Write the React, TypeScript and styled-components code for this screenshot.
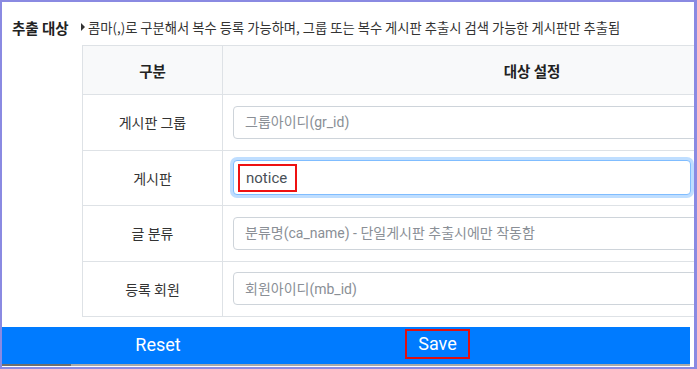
import styled, { createGlobalStyle, css } from "styled-components";

const GlobalStyle = createGlobalStyle`
  html, body {
    margin: 0;
    padding: 0;
    background: #ffffff;
  }
  * {
    box-sizing: border-box;
  }
`;

const rows = [
  { label: "게시판 그룹", placeholder: "그룹아이디(gr_id)", value: "" },
  { label: "게시판", placeholder: "", value: "notice", focused: true },
  {
    label: "글 분류",
    placeholder: "분류명(ca_name) - 단일게시판 추출시에만 작동함",
    value: "",
  },
  { label: "등록 회원", placeholder: "회원아이디(mb_id)", value: "" },
];

const App = () => {
  return (
    <>
      <GlobalStyle />
      <Frame>
        <InfoRow>
          <Title>추출 대상</Title>
          <Arrow />
          <Help>
            콤마(,)로 구분해서 복수 등록 가능하며, 그룹 또는 복수 게시판
            추출시 검색 가능한 게시판만 추출됨
          </Help>
        </InfoRow>
        <Table>
          <thead>
            <tr>
              <HeadCell $first>구분</HeadCell>
              <HeadCell>대상 설정</HeadCell>
            </tr>
          </thead>
          <tbody>
            {rows.map((row, index) => (
              <tr key={index}>
                <LabelCell>{row.label}</LabelCell>
                <InputCell>
                  {row.focused ? (
                    <FocusBox>
                      <Marked>{row.value}</Marked>
                    </FocusBox>
                  ) : (
                    <TextInput placeholder={row.placeholder} readOnly />
                  )}
                </InputCell>
              </tr>
            ))}
          </tbody>
        </Table>
        <BottomBar>
          <ActionButton>Reset</ActionButton>
          <ActionButton $marked>Save</ActionButton>
        </BottomBar>
        <UnderLine>
          <DarkPart />
        </UnderLine>
      </Frame>
    </>
  );
};

export default App;

const Frame = styled.div`
  width: 697px;
  height: 369px;
  border-style: solid;
  border-color: #8a8ae2;
  border-width: 2px 3px 2px 2px;
  overflow: hidden;
  background: #ffffff;
  font-family: "Noto Sans", "Noto Sans CJK KR", sans-serif;
  color: #333333;
  display: flex;
  flex-direction: column;
`;

const InfoRow = styled.div`
  display: flex;
  align-items: center;
  height: 20px;
  margin-top: 15px;
  padding-left: 10px;
  white-space: nowrap;
`;

const Title = styled.span`
  font-family: "Noto Sans CJK KR", sans-serif;
  font-size: 14.5px;
  font-weight: 700;
  color: #222222;
  width: 69px;
`;

const Arrow = styled.span`
  width: 0;
  height: 0;
  border-left: 4px solid #333333;
  border-top: 4px solid transparent;
  border-bottom: 4px solid transparent;
  margin-right: 3px;
`;

const Help = styled.span`
  font-family: "Noto Sans CJK KR", sans-serif;
  font-size: 13.3px;
  color: #333333;
`;

const Table = styled.table`
  border-collapse: collapse;
  margin: 8px 0 0 80px;
  width: 760px;
  flex-shrink: 0;
  table-layout: fixed;
`;

const HeadCell = styled.th<{ $first?: boolean }>`
  height: 49px;
  width: ${(props) => (props.$first ? "140px" : "auto")};
  border: 1px solid #dee2e6;
  background: #f8f9fa;
  font-family: "Noto Sans CJK KR", sans-serif;
  font-size: 14.5px;
  font-weight: 700;
  color: #222222;
  text-align: center;
  padding: 0;
`;

const LabelCell = styled.td`
  height: 55.5px;
  border: 1px solid #dee2e6;
  font-family: "Noto Sans CJK KR", sans-serif;
  font-size: 14px;
  color: #333333;
  text-align: center;
  padding: 0;
`;

const InputCell = styled.td`
  height: 55.5px;
  border: 1px solid #dee2e6;
  padding: 0 10px;
  vertical-align: middle;
`;

const inputBase = css`
  display: flex;
  align-items: center;
  height: 33px;
  border-radius: 4px;
  padding: 0 11px;
  font-family: Roboto, "Noto Sans CJK KR", sans-serif;
  font-size: 14px;
`;

const TextInput = styled.input`
  ${inputBase};
  width: 100%;
  border: 1px solid #ced4da;
  color: #495057;
  background: #ffffff;
  outline: none;
  &::placeholder {
    color: #8a8f96;
    font-family: Roboto, "Noto Sans CJK KR", sans-serif;
  }
`;

const FocusBox = styled.div`
  ${inputBase};
  width: 458px;
  height: 35px;
  padding: 0 4px;
  border: 1px solid #80bdff;
  box-shadow: 0 0 0 3px rgba(0, 123, 255, 0.25);
  color: #495057;
  background: #ffffff;
`;

const Marked = styled.span`
  border: 2px solid #ee1111;
  padding: 0 8px 0 6px;
  height: 28px;
  display: flex;
  align-items: center;
  font-size: 15px;
`;

const BottomBar = styled.div`
  display: flex;
  align-items: center;
  height: 37px;
  width: 688px;
  margin-top: 10px;
  background: #007bff;
  flex-shrink: 0;
`;

const ActionButton = styled.div<{ $marked?: boolean }>`
  font-family: Roboto, "Noto Sans", sans-serif;
  font-size: 18px;
  color: #ffffff;
  text-align: center;
  ${(props) =>
    props.$marked
      ? css`
          width: 65px;
          height: 30px;
          margin-left: 91px;
          margin-top: -4px;
          border: 2px solid #e01010;
          line-height: 26px;
        `
      : css`
          width: 312px;
          margin-top: -3px;
        `}
`;

const UnderLine = styled.div`
  height: 2px;
  background: #a9a9a9;
  width: 688px;
  flex-shrink: 0;
`;

const DarkPart = styled.div`
  height: 2px;
  width: 69px;
  background: #707070;
`;
